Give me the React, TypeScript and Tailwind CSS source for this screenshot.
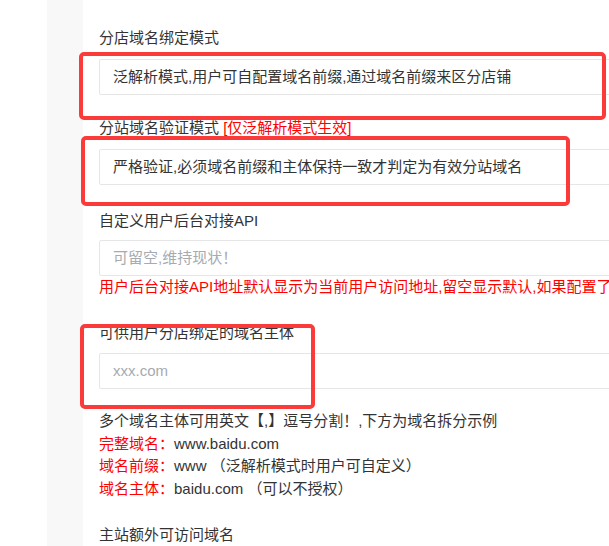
const font = { fontFamily: '"Liberation Sans", "Noto Sans CJK SC", sans-serif' };

function Field({ value, placeholder }: { value?: string; placeholder?: string }) {
  return (
    <div className="h-[36px] w-[620px] rounded-[2px] border border-[#e6e6e6] bg-white pl-[13px] flex items-center">
      {value ? (
        <span className="text-[#333]">{value}</span>
      ) : (
        <span className="text-[#a6abb1]">{placeholder}</span>
      )}
    </div>
  );
}

export default function App() {
  return (
    <div
      className="relative flex h-[546px] w-[609px] overflow-hidden bg-white text-[15px] text-[#333]"
      style={font}
    >
      <div className="w-[47px] shrink-0 bg-white" />
      <div className="w-[36px] shrink-0 bg-[#f8f8f8]" />

      <div className="flex-1 pl-[16px] pt-[27px]">
        <div className="leading-[22px] mb-[10px]">分店域名绑定模式</div>
        <Field value="泛解析模式,用户可自配置域名前缀,通过域名前缀来区分店铺" />

        <div className="leading-[22px] mt-[22px] mb-[10px]">
          分站域名验证模式 <span className="text-[#ff0000]">[仅泛解析模式生效]</span>
        </div>
        <Field value="严格验证,必须域名前缀和主体保持一致才判定为有效分站域名" />

        <div className="leading-[22px] mt-[25px] mb-[8px]">自定义用户后台对接API</div>
        <Field placeholder="可留空,维持现状！" />
        <div className="leading-[22px] whitespace-nowrap text-[#ff0000]">
          用户后台对接API地址默认显示为当前用户访问地址,留空显示默认,如果配置了将显示配置的地址
        </div>

        <div className="leading-[22px] mt-[24px] mb-[9px]">可供用户分店绑定的域名主体</div>
        <Field placeholder="xxx.com" />

        <div className="mt-[21px] leading-[22.5px] whitespace-nowrap">
          <div>多个域名主体可用英文【,】逗号分割！,下方为域名拆分示例</div>
          <div>
            <span className="text-[#ff0000]">完整域名：</span>www.baidu.com
          </div>
          <div>
            <span className="text-[#ff0000]">域名前缀：</span>www （泛解析模式时用户可自定义）
          </div>
          <div>
            <span className="text-[#ff0000]">域名主体：</span>baidu.com （可以不授权）
          </div>
          <div className="h-[22.5px]" />
          <div className="mt-[1px]">主站额外可访问域名</div>
        </div>
      </div>

      <div className="pointer-events-none absolute left-[79px] top-[52px] h-[68px] w-[527px] rounded-[5px] border-4 border-[#fb3a3a]" />
      <div className="pointer-events-none absolute left-[81px] top-[136px] h-[70px] w-[489px] rounded-[5px] border-4 border-[#fb3a3a]" />
      <div className="pointer-events-none absolute left-[80px] top-[324px] h-[85px] w-[235px] rounded-[5px] border-4 border-[#fb3a3a]" />
    </div>
  );
}
